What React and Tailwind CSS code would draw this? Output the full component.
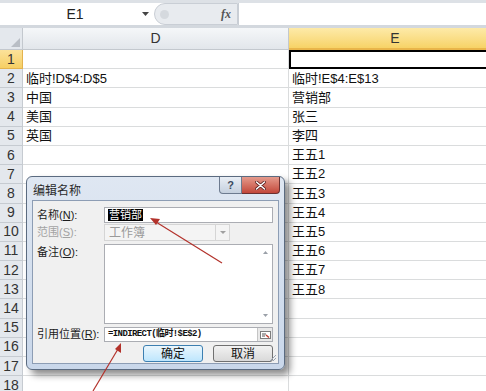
import React from 'react';

const rows = [
  { d: '', e: '' },
  { d: '临时!D$4:D$5', e: '临时!E$4:E$13' },
  { d: '中国', e: '营销部' },
  { d: '美国', e: '张三' },
  { d: '英国', e: '李四' },
  { d: '', e: '王五1' },
  { d: '', e: '王五2' },
  { d: '', e: '王五3' },
  { d: '', e: '王五4' },
  { d: '', e: '王五5' },
  { d: '', e: '王五6' },
  { d: '', e: '王五7' },
  { d: '', e: '王五8' },
  { d: '', e: '' },
  { d: '', e: '' },
  { d: '', e: '' },
  { d: '', e: '' },
  { d: '', e: '' },
];

function FormulaBar() {
  return (
    <div className="h-[28px] flex bg-white border-t-[3px] border-t-[#dde1e6] border-b-[3px] border-b-[#d3d8de]">
      <div className="w-[152px] flex items-center relative">
        <span className="flex-1 text-center text-[14px] text-[#222] pl-[8px]">E1</span>
        <svg width="7" height="4" className="mr-[3px]" viewBox="0 0 7 4">
          <path d="M0 0h7L3.5 4z" fill="#444" />
        </svg>
      </div>
      <div className="w-[84px] h-[22px] bg-[#e8ebef] rounded-l-full border border-[#c9ced5] flex items-center ml-[2px]">
        <div className="w-[9px] h-[9px] rounded-full bg-[#d5d9de] ml-[5px]" />
        <span className="ml-auto mr-[6px] text-[12px] italic font-bold text-[#555] font-['Liberation_Serif',serif]">fx</span>
      </div>
      <div className="flex-1 border-l border-[#c9ced5]" />
    </div>
  );
}

function HeaderRow() {
  return (
    <div className="h-[22px] flex">
      <div className="w-[23px] shrink-0 bg-[#e4e8ed] border-r border-b border-[#c3c8ce] relative">
        <svg width="9" height="9" viewBox="0 0 9 9" className="absolute right-[2px] bottom-[2px]">
          <path d="M9 0v9H0z" fill="#b9bec5" />
        </svg>
      </div>
      <div className="w-[266px] shrink-0 bg-gradient-to-b from-[#f5f7f9] to-[#e2e6eb] border-r border-b border-[#c3c8ce] flex items-center justify-center text-[14px] text-[#333]">
        D
      </div>
      <div className="w-[212px] shrink-0 bg-gradient-to-b from-[#fdeaa8] to-[#f7d366] border-b-2 border-[#e9b54a] flex items-center justify-center text-[14px] text-[#333]">
        E
      </div>
    </div>
  );
}

function GridRow({ n, d, e }) {
  const selected = n === 1;
  return (
    <div className="h-[19.2px] flex">
      <div
        className={
          selected
            ? 'w-[23px] shrink-0 bg-gradient-to-b from-[#fbe29a] to-[#f6cf63] border-r border-b border-[#e4b34d] flex items-center justify-center text-[14px] text-[#333]'
            : 'w-[23px] shrink-0 bg-[#e4e8ed] border-r border-b border-[#c6cbd1] flex items-center justify-center text-[14px] text-[#333]'
        }
      >
        {n}
      </div>
      <div className="w-[266px] shrink-0 border-r border-b border-[#dadcdd] flex items-center pl-[3px] text-[13px] text-[#111] whitespace-nowrap">
        {d}
      </div>
      <div
        className={
          selected
            ? 'w-[212px] shrink-0 border-2 border-black'
            : 'w-[212px] shrink-0 border-b border-[#dadcdd] flex items-center pl-[3px] text-[13px] text-[#111] whitespace-nowrap'
        }
      >
        {e}
      </div>
    </div>
  );
}

function Label({ children, disabled }) {
  return (
    <div
      className={
        disabled
          ? 'w-[71px] shrink-0 pl-[4px] text-[11px] whitespace-nowrap text-[#a3a3a3]'
          : 'w-[71px] shrink-0 pl-[4px] text-[11px] whitespace-nowrap text-[#1b1b1b]'
      }
    >
      {children}
    </div>
  );
}

function Dialog() {
  return (
    <div className="absolute left-[26px] top-[176px] w-[259px] h-[194px] rounded-[6px] border border-[#5b6b80] bg-gradient-to-b from-[#dfe7f2] to-[#c9d7ea] shadow-[5px_5px_7px_rgba(0,0,0,0.45)]">
      {/* title bar */}
      <div className="h-[23px] flex items-start">
        <span className="pl-[6px] pt-[5px] text-[12px] text-[#2a2a2a]">编辑名称</span>
        <div className="ml-auto mr-[4px] flex">
          <div className="w-[23px] h-[17px] rounded-bl-[4px] border border-t-0 border-[#6d7b8f] bg-gradient-to-b from-[#e9eef5] to-[#c5d0de] flex items-center justify-center text-[11px] font-bold text-[#3b4a5e]">
            ?
          </div>
          <div className="w-[38px] h-[17px] rounded-br-[4px] border border-t-0 border-l-0 border-[#6b3030] bg-gradient-to-b from-[#e49a8c] to-[#c2463a] flex items-center justify-center">
            <svg width="11" height="9" viewBox="0 0 11 9">
              <path d="M1.5 1l8 7M9.5 1l-8 7" stroke="#5a1f1f" strokeWidth="3" strokeLinecap="round" />
              <path d="M1.5 1l8 7M9.5 1l-8 7" stroke="#fff" strokeWidth="1.6" strokeLinecap="round" />
            </svg>
          </div>
        </div>
      </div>
      {/* body */}
      <div className="mx-[5px] h-[164px] bg-[#f0f0f0] border border-[#8d9db4] relative pt-[6px] pr-[5px]">
        <div className="flex items-center h-[16px]">
          <Label>名称(<span className="underline">N</span>):</Label>
          <div className="flex-1 h-[16px] bg-white border border-[#abadb3] flex items-center pl-[3px]">
            <span className="bg-black text-white text-[11px] leading-[12px] px-[1px]">营销部</span>
          </div>
        </div>
        <div className="flex items-center h-[17px] mt-[1px]">
          <Label disabled>范围(<span className="underline">S</span>):</Label>
          <div className="w-[126px] h-[17px] bg-[#f4f4f4] border border-[#d5d5d5] flex items-center">
            <span className="flex-1 pl-[4px] text-[12px] text-[#9a9a9a]">工作簿</span>
            <div className="w-[14px] h-full border-l border-[#d5d5d5] flex items-center justify-center">
              <svg width="6" height="3" viewBox="0 0 6 3">
                <path d="M0 0h6L3 3z" fill="#a0a0a0" />
              </svg>
            </div>
          </div>
        </div>
        <div className="flex items-start h-[80px] mt-[3px]">
          <Label>备注(<span className="underline">O</span>):</Label>
          <div className="flex-1 h-[80px] bg-white border border-[#abadb3] flex justify-end">
            <div className="w-[13px] h-full flex flex-col items-center justify-between py-[6px]">
              <svg width="5" height="3" viewBox="0 0 5 3">
                <path d="M0 3h5L2.5 0z" fill="#9aa0a8" />
              </svg>
              <svg width="5" height="3" viewBox="0 0 5 3">
                <path d="M0 0h5L2.5 3z" fill="#9aa0a8" />
              </svg>
            </div>
          </div>
        </div>
        <div className="flex items-center h-[15px] mt-[3px]">
          <Label>引用位置(<span className="underline">R</span>):</Label>
          <div className="flex-1 h-[15px] bg-white border border-[#abadb3] flex items-center">
            <span className="flex-1 pl-[3px] text-[9px] tracking-[-0.6px] font-bold text-[#111] font-['Liberation_Mono','Noto_Sans_CJK_SC',monospace] whitespace-nowrap">
              =INDIRECT(临时!$E$2)
            </span>
            <div className="w-[15px] h-[13px] border-l border-[#c5c5c5] bg-[#e9e9e9] flex items-center justify-center">
              <svg width="11" height="8" viewBox="0 0 11 8">
                <rect x="0.5" y="0.5" width="10" height="7" fill="#fff" stroke="#7d7d7d" />
                <path d="M2 3h4M2 5h3" stroke="#555" />
                <path d="M6 4l3 2.5" stroke="#c0392b" strokeWidth="1.5" />
              </svg>
            </div>
          </div>
        </div>
        <div className="flex justify-end gap-[10px] mt-[3px]">
          <div className="w-[60px] h-[17px] rounded-[3px] border border-[#3c7fb1] bg-gradient-to-b from-[#eaf6fd] to-[#bee6fd] flex items-center justify-center text-[12px] text-[#111]">
            确定
          </div>
          <div className="w-[60px] h-[17px] rounded-[3px] border border-[#707070] bg-gradient-to-b from-[#f2f2f2] to-[#d9d9d9] flex items-center justify-center text-[12px] text-[#111]">
            取消
          </div>
        </div>
        <svg width="8" height="8" viewBox="0 0 8 8" className="absolute right-[1px] bottom-[1px]">
          <path d="M7 1L1 7M7 4L4 7" stroke="#9aa4b2" />
        </svg>
      </div>
    </div>
  );
}

function Arrows() {
  return (
    <svg width="486" height="391" className="absolute left-0 top-0 pointer-events-none">
      <line x1="222" y1="263" x2="156" y2="222" stroke="#b3322b" strokeWidth="1.2" />
      <path d="M150 218 L160 219 L156 225 Z" fill="#b3322b" />
      <line x1="93" y1="391" x2="118" y2="349" stroke="#b3322b" strokeWidth="1.2" />
      <path d="M121 343 L121 353 L115 349 Z" fill="#b3322b" />
    </svg>
  );
}

export default function App() {
  return (
    <div className="w-[486px] h-[391px] overflow-hidden relative bg-white font-['Liberation_Sans','Noto_Sans_CJK_SC',sans-serif]">
      <FormulaBar />
      <HeaderRow />
      {rows.map((r, i) => (
        <GridRow key={i} n={i + 1} d={r.d} e={r.e} />
      ))}
      <Dialog />
      <Arrows />
    </div>
  );
}
